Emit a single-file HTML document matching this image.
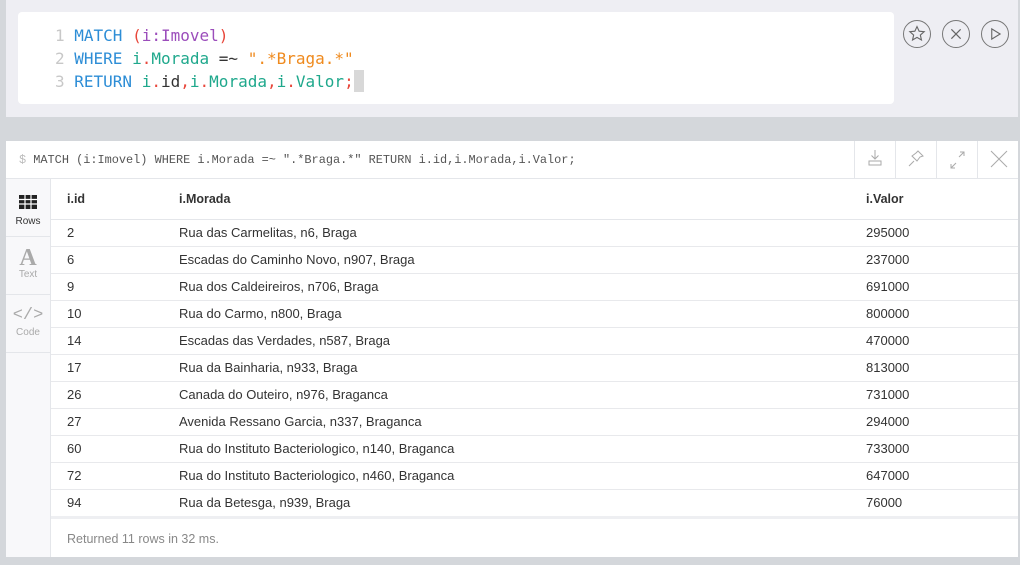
<!DOCTYPE html>
<html><head><style>
*{margin:0;padding:0;box-sizing:border-box}
body{width:1020px;height:565px;background:#d4d7db;font-family:"Liberation Sans",Arial,sans-serif;position:relative;overflow:hidden}
.top{position:absolute;left:6px;top:0;width:1012px;height:117px;background:#eeeef3}
.ed{position:absolute;left:12px;top:12px;width:876px;height:92px;background:#fff;border-radius:4px}
.code{position:absolute;left:37px;top:12px;font-family:"DejaVu Sans Mono",monospace;font-size:16px;line-height:23px;white-space:pre;color:#333}
.ln{color:#c8c8c8}
.k{color:#2d8dd6}.v{color:#1fa88c}.p{color:#e8473b}.l{color:#9b4dbb}.s{color:#ef8a1e}
.cur{display:inline-block;width:10px;height:22px;background:#d8d8d8;vertical-align:-5px}
.btn{position:absolute;top:20px;width:28px;height:28px;border:1.3px solid #777;border-radius:50%}
.res{position:absolute;left:6px;top:141px;width:1012px;height:416px;background:#fff}
.hdr{position:absolute;left:0;top:0;width:1012px;height:38px;border-bottom:1px solid #e4e6ea}
.q{position:absolute;left:13px;top:12px;font-family:"Liberation Mono",monospace;font-size:11.9px;color:#555;white-space:pre}
.hb{position:absolute;top:0;width:41px;height:38px;border-left:1px solid #e4e6ea}
.side{position:absolute;left:0;top:38px;width:45px;height:378px;background:#f8f8fa;border-right:1px solid #e4e6ea}
.tab{height:58px;border-bottom:1px solid #e4e6ea;text-align:center;font-size:10px;color:#aaa;position:relative}
table{position:absolute;left:45px;top:38px;width:967px;border-collapse:collapse;font-size:13px;color:#333}
th{text-align:left;font-weight:bold;height:40px;border-bottom:1px solid #e4e6ea;font-size:12.5px}
td{height:27px;border-bottom:1px solid #e8e9ec}
.c1{padding-left:16px;width:128px}.c2{width:687px}
.foot{position:absolute;left:45px;top:375px;width:967px;height:41px;border-top:3px solid #eeeff2;font-size:12.5px;color:#888;padding:13px 0 0 16px}
</style></head><body>
<div class="top">
<div class="ed"><div class="code"><span class="ln">1 </span><span class="k">MATCH</span> <span class="p">(</span><span class="l">i:Imovel</span><span class="p">)</span>
<span class="ln">2 </span><span class="k">WHERE</span> <span class="v">i</span><span class="p">.</span><span class="v">Morada</span> =~ <span class="s">".*Braga.*"</span>
<span class="ln">3 </span><span class="k">RETURN</span> <span class="v">i</span><span class="p">.</span>id<span class="p">,</span><span class="v">i</span><span class="p">.</span><span class="v">Morada</span><span class="p">,</span><span class="v">i</span><span class="p">.</span><span class="v">Valor</span><span class="p">;</span><span class="cur"></span></div></div>
<svg class="btn" style="left:897px" viewBox="0 0 28 28"><path d="M14 6l2.3 5 5.4.5-4.1 3.6 1.2 5.3-4.8-2.8-4.8 2.8 1.2-5.3-4.1-3.6 5.4-.5z" fill="none" stroke="#666" stroke-width="1.2"/></svg>
<svg class="btn" style="left:936px" viewBox="0 0 28 28"><path d="M9 9l10 10M19 9L9 19" stroke="#666" stroke-width="1.3"/></svg>
<svg class="btn" style="left:975px" viewBox="0 0 28 28"><path d="M10.5 8.5v11l9-5.5z" fill="none" stroke="#666" stroke-width="1.2"/></svg>
</div>
<div class="res">
<div class="hdr"><div class="q"><span style="color:#bbb">$</span> MATCH (i:Imovel) WHERE i.Morada =~ ".*Braga.*" RETURN i.id,i.Morada,i.Valor;</div>
<div class="hb" style="left:848px"><svg width="41" height="38"><path d="M20 9v9M16.5 14.5l3.5 3.5 3.5-3.5M14 20h12v4H14z" fill="none" stroke="#aaa"/></svg></div>
<div class="hb" style="left:889px"><svg width="41" height="38"><path d="M22 10l5 5-3 1-3 4-5-5 4-3zM18 20l-5 5" fill="none" stroke="#aaa"/></svg></div>
<div class="hb" style="left:930px"><svg width="41" height="38"><path d="M23 11h4v4M27 11l-5 5M18 27h-4v-4M14 27l5-5" fill="none" stroke="#aaa"/></svg></div>
<div class="hb" style="left:971px"><svg width="41" height="38"><path d="M13 10l16 16M29 10L13 26" stroke="#aaa"/></svg></div>
</div>
<div class="side">
<div class="tab" style="color:#333"><svg width="20" height="16" style="margin-top:15px"><rect x="1" y="1" width="18" height="14" fill="#222"/><path d="M1 5.5h18M1 10h18M7 1v14M13 1v14" stroke="#fff" stroke-width="1.2"/></svg><div style="margin-top:3px">Rows</div></div>
<div class="tab"><div style="font-family:'Liberation Serif',serif;font-size:24px;font-weight:bold;color:#aaa;padding-top:10px;line-height:22px">A</div><div>Text</div></div>
<div class="tab"><div style="font-size:17px;color:#aaa;padding-top:10px;line-height:22px;font-family:'Liberation Mono',monospace">&lt;/&gt;</div><div>Code</div></div>
</div>
<table>
<tr><th class="c1">i.id</th><th class="c2">i.Morada</th><th>i.Valor</th></tr>
<tr><td class="c1">2</td><td>Rua das Carmelitas, n6, Braga</td><td>295000</td></tr>
<tr><td class="c1">6</td><td>Escadas do Caminho Novo, n907, Braga</td><td>237000</td></tr>
<tr><td class="c1">9</td><td>Rua dos Caldeireiros, n706, Braga</td><td>691000</td></tr>
<tr><td class="c1">10</td><td>Rua do Carmo, n800, Braga</td><td>800000</td></tr>
<tr><td class="c1">14</td><td>Escadas das Verdades, n587, Braga</td><td>470000</td></tr>
<tr><td class="c1">17</td><td>Rua da Bainharia, n933, Braga</td><td>813000</td></tr>
<tr><td class="c1">26</td><td>Canada do Outeiro, n976, Braganca</td><td>731000</td></tr>
<tr><td class="c1">27</td><td>Avenida Ressano Garcia, n337, Braganca</td><td>294000</td></tr>
<tr><td class="c1">60</td><td>Rua do Instituto Bacteriologico, n140, Braganca</td><td>733000</td></tr>
<tr><td class="c1">72</td><td>Rua do Instituto Bacteriologico, n460, Braganca</td><td>647000</td></tr>
<tr><td class="c1" style="border:none">94</td><td style="border:none">Rua da Betesga, n939, Braga</td><td style="border:none">76000</td></tr>
</table>
<div class="foot">Returned 11 rows in 32 ms.</div>
</div>
</body></html>
